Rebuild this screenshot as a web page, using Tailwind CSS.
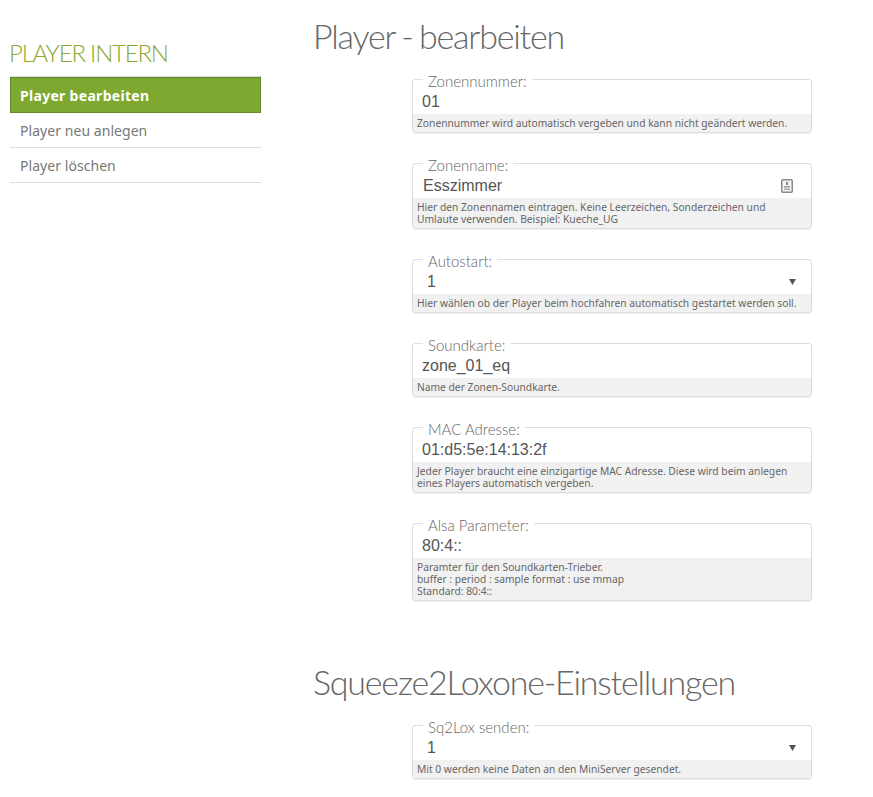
<!DOCTYPE html>
<html lang="de">

<head>
    <meta charset="UTF-8">
    <title>Player - bearbeiten</title>
    <script src="https://cdn.jsdelivr.net/npm/@tailwindcss/browser@4"></script>
</head>

<body class="bg-white overflow-hidden h-[797px] font-['Lato',sans-serif] text-[#555]">
    <div class="flex">
        <aside class="w-[251px] ml-[10px] shrink-0 pt-[38px]">
            <h3 class="-ml-[1px] text-[24px] leading-[30px] font-light text-[#8aa82f] tracking-[-1.2px]">PLAYER INTERN</h3>
            <ul class="mt-[8px] border-t border-[#ddd] text-[14px] font-['Noto_Sans',sans-serif]">
                <li class="h-[36px] flex items-center pl-[9px] pt-[1px] bg-[#7ea82f] border border-[#66862a] text-white font-bold tracking-[0.3px]">Player bearbeiten</li>
                <li class="h-[35px] flex items-center pl-[10px] pt-[1px] border-b border-[#ddd] text-[#777] tracking-[0.05px]">Player neu anlegen</li>
                <li class="h-[35px] flex items-center pl-[10px] pt-[1px] border-b border-[#ddd] text-[#777] tracking-[0.05px]">Player löschen</li>
            </ul>
        </aside>

        <main class="ml-[53px] w-[498px]">
            <h1 class="-ml-[1px] mt-[14px] text-[34px] leading-[44px] font-light text-[#666] tracking-[-1.2px] [word-spacing:-1.5px]">Player - bearbeiten</h1>

            <div class="ml-[98px] w-[400px] mt-[12px] flex flex-col gap-[21px]">
                <fieldset class="border border-[#ddd] rounded-[3px] shadow-[0_1px_1px_rgba(0,0,0,0.06)]">
                    <legend class="ml-[10px] px-[5px] pt-[4px] pb-[1px] text-[15px] leading-[14px] font-light text-[#666]">Zonennummer:</legend>
                    <div class="h-[25px] pl-[9px] flex items-center font-['Liberation_Sans',sans-serif] text-[16px] text-[#555]">01</div>
                    <p class="bg-[#f1f1f1] pl-[4px] pr-[3px] pt-[3px] pb-[3px] text-[10.25px] leading-[12px] text-[#666] font-['Noto_Sans',sans-serif]">Zonennummer wird automatisch vergeben und kann nicht geändert werden.</p>
                </fieldset>

                <fieldset class="border border-[#ddd] rounded-[3px] shadow-[0_1px_1px_rgba(0,0,0,0.06)]">
                    <legend class="ml-[10px] px-[5px] pt-[4px] pb-[1px] text-[15px] leading-[14px] font-light text-[#666]">Zonenname:</legend>
                    <div class="h-[25px] pl-[10px] pr-[18px] flex items-center justify-between font-['Liberation_Sans',sans-serif] text-[16px] text-[#555]">
                        <span>Esszimmer</span>
                        <svg class="w-[12px] h-[14px]" viewBox="0 0 12 14">
                            <rect x="0.75" y="0.75" width="10.5" height="12.5" rx="1" fill="#f4f4f4" stroke="#8a8a8a" stroke-width="1.5" />
                            <rect x="5" y="3" width="2" height="3" fill="#888" />
                            <rect x="3" y="7" width="6" height="1.5" fill="#999" />
                            <rect x="3" y="9.5" width="6" height="1.5" fill="#aaa" />
                        </svg>
                    </div>
                    <p class="bg-[#f1f1f1] pl-[4px] pr-[3px] pt-[3px] pb-[3px] text-[10.25px] leading-[12px] text-[#666] font-['Noto_Sans',sans-serif]">Hier den Zonennamen eintragen. Keine Leerzeichen, Sonderzeichen und<br>Umlaute verwenden. Beispiel: Kueche_UG</p>
                </fieldset>

                <fieldset class="border border-[#ddd] rounded-[3px] shadow-[0_1px_1px_rgba(0,0,0,0.06)]">
                    <legend class="ml-[10px] px-[5px] pt-[4px] pb-[1px] text-[15px] leading-[14px] font-light text-[#666]">Autostart:</legend>
                    <div class="h-[25px] pl-[14px] pr-[15px] flex items-center justify-between font-['Liberation_Sans',sans-serif] text-[16px] text-[#555]">
                        <span>1</span>
                        <svg class="w-[7px] h-[6px]" viewBox="0 0 7 6"><path d="M0 0h7L3.5 6z" fill="#555" /></svg>
                    </div>
                    <p class="bg-[#f1f1f1] pl-[4px] pr-[3px] pt-[3px] pb-[3px] text-[10.25px] leading-[12px] text-[#666] font-['Noto_Sans',sans-serif]">Hier wählen ob der Player beim hochfahren automatisch gestartet werden soll.</p>
                </fieldset>

                <fieldset class="border border-[#ddd] rounded-[3px] shadow-[0_1px_1px_rgba(0,0,0,0.06)]">
                    <legend class="ml-[10px] px-[5px] pt-[4px] pb-[1px] text-[15px] leading-[14px] font-light text-[#666]">Soundkarte:</legend>
                    <div class="h-[25px] pl-[9px] flex items-center font-['Liberation_Sans',sans-serif] text-[16px] text-[#555]">zone_01_eq</div>
                    <p class="bg-[#f1f1f1] pl-[4px] pr-[3px] pt-[3px] pb-[3px] text-[10.25px] leading-[12px] text-[#666] font-['Noto_Sans',sans-serif]">Name der Zonen-Soundkarte.</p>
                </fieldset>

                <fieldset class="border border-[#ddd] rounded-[3px] shadow-[0_1px_1px_rgba(0,0,0,0.06)]">
                    <legend class="ml-[10px] px-[5px] pt-[4px] pb-[1px] text-[15px] leading-[14px] font-light text-[#666]">MAC Adresse:</legend>
                    <div class="h-[25px] pl-[9px] flex items-center font-['Liberation_Sans',sans-serif] text-[16px] text-[#555]">01:d5:5e:14:13:2f</div>
                    <p class="bg-[#f1f1f1] pl-[4px] pr-[3px] pt-[3px] pb-[3px] text-[10.25px] leading-[12px] text-[#666] font-['Noto_Sans',sans-serif]">Jeder Player braucht eine einzigartige MAC Adresse. Diese wird beim anlegen<br>eines Players automatisch vergeben.</p>
                </fieldset>

                <fieldset class="border border-[#ddd] rounded-[3px] shadow-[0_1px_1px_rgba(0,0,0,0.06)]">
                    <legend class="ml-[10px] px-[5px] pt-[4px] pb-[1px] text-[15px] leading-[14px] font-light text-[#666]">Alsa Parameter:</legend>
                    <div class="h-[25px] pl-[9px] flex items-center font-['Liberation_Sans',sans-serif] text-[16px] text-[#555]">80:4::</div>
                    <p class="bg-[#f1f1f1] pl-[4px] pr-[3px] pt-[3px] pb-[3px] text-[10.25px] leading-[12px] text-[#666] font-['Noto_Sans',sans-serif]">Paramter für den Soundkarten-Trieber.<br>buffer : period : sample format : use mmap<br>Standard: 80:4::</p>
                </fieldset>
            </div>

            <h1 class="-ml-[1px] mt-[59px] text-[34px] leading-[44px] font-light text-[#666] tracking-[-1.2px]">Squeeze2Loxone-Einstellungen</h1>

            <div class="ml-[98px] w-[400px] mt-[12px]">
                <fieldset class="border border-[#ddd] rounded-[3px] shadow-[0_1px_1px_rgba(0,0,0,0.06)]">
                    <legend class="ml-[10px] px-[5px] pt-[4px] pb-[1px] text-[15px] leading-[14px] font-light text-[#666]">Sq2Lox senden:</legend>
                    <div class="h-[25px] pl-[14px] pr-[15px] flex items-center justify-between font-['Liberation_Sans',sans-serif] text-[16px] text-[#555]">
                        <span>1</span>
                        <svg class="w-[7px] h-[6px]" viewBox="0 0 7 6"><path d="M0 0h7L3.5 6z" fill="#555" /></svg>
                    </div>
                    <p class="bg-[#f1f1f1] pl-[4px] pr-[3px] pt-[3px] pb-[3px] text-[10.25px] leading-[12px] text-[#666] font-['Noto_Sans',sans-serif]">Mit 0 werden keine Daten an den MiniServer gesendet.</p>
                </fieldset>
            </div>
        </main>
    </div>
</body>

</html>
